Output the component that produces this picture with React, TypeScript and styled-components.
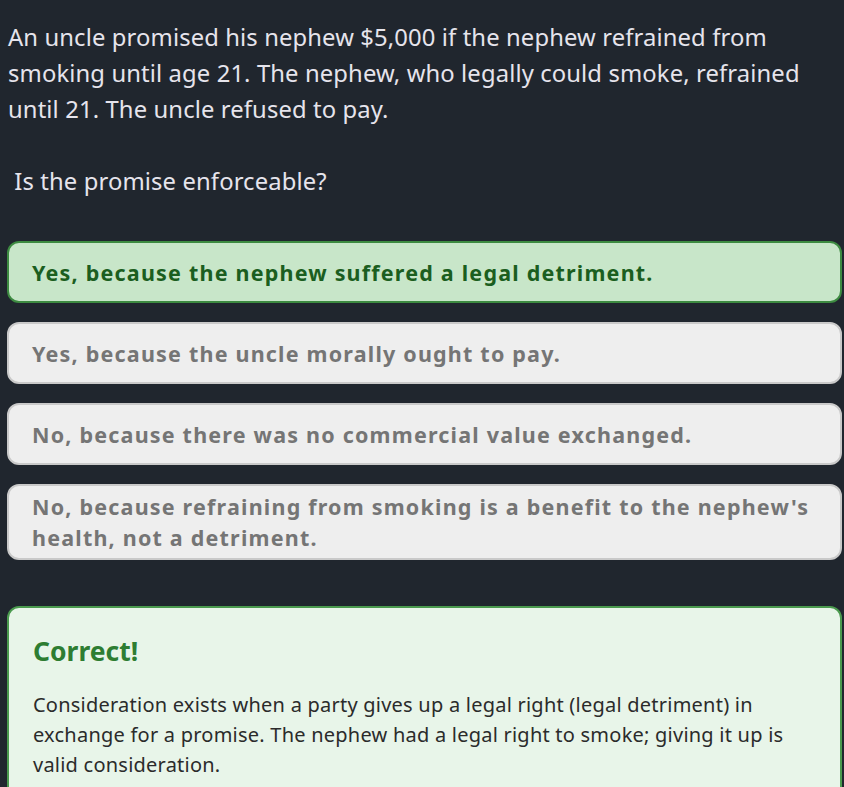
import React from "react";
import styled, { createGlobalStyle } from "styled-components";

const Global = createGlobalStyle`
  html, body {
    margin: 0;
    padding: 0;
    background: #20262e;
  }
  body {
    font-family: "Noto Sans", "Open Sans", sans-serif;
    overflow: hidden;
  }
`;

const Page = styled.main`
  width: 835px;
  padding: 19px 0 0 7px;
  display: flex;
  flex-direction: column;
`;

const Question = styled.p`
  margin: 0 0 42px 1px;
  font-size: 23.8px;
  line-height: 36px;
  letter-spacing: 0.12px;
  color: #e6e4ec;
  white-space: pre-wrap;
`;

const Options = styled.div`
  display: flex;
  flex-direction: column;
  gap: 19px;
`;

const Option = styled.button<{ $correct?: boolean }>`
  box-sizing: border-box;
  width: 100%;
  min-height: 62px;
  display: flex;
  align-items: center;
  text-align: left;
  padding: 5px 8px 5px 23px;
  border-radius: 12px;
  border: 2px solid ${(p) => (p.$correct ? "#3d8b41" : "#c9c9c9")};
  background: ${(p) => (p.$correct ? "#c8e6c9" : "#eeeeee")};
  color: ${(p) => (p.$correct ? "#1b5e20" : "#757575")};
  font-family: inherit;
  font-size: 21.5px;
  font-weight: 700;
  line-height: 31px;
  letter-spacing: 1.2px;
  cursor: pointer;
`;

const Explanation = styled.section`
  box-sizing: border-box;
  margin-top: 46px;
  padding: 26px 24px 40px;
  border: 2px solid #4a9a4e;
  border-radius: 12px;
  background: #e8f5e9;
`;

const ExplanationTitle = styled.h3`
  margin: 0 0 22px;
  font-size: 26.5px;
  line-height: 34px;
  font-weight: 700;
  color: #2e7d32;
`;

const ExplanationText = styled.p`
  margin: 0;
  font-size: 20px;
  line-height: 30px;
  letter-spacing: 0.23px;
  color: #2b2b2b;
`;

const options = [
  { text: "Yes, because the nephew suffered a legal detriment.", correct: true },
  { text: "Yes, because the uncle morally ought to pay.", correct: false },
  { text: "No, because there was no commercial value exchanged.", correct: false },
  {
    text: "No, because refraining from smoking is a benefit to the nephew's health, not a detriment.",
    correct: false,
  },
];

export default function App() {
  return (
    <>
      <Global />
      <Page>
        <Question>
          {
            "An uncle promised his nephew $5,000 if the nephew refrained from smoking until age 21. The nephew, who legally could smoke, refrained until 21. The uncle refused to pay.\n\n Is the promise enforceable?"
          }
        </Question>
        <Options>
          {options.map((o) => (
            <Option key={o.text} $correct={o.correct}>
              {o.text}
            </Option>
          ))}
        </Options>
        <Explanation>
          <ExplanationTitle>Correct!</ExplanationTitle>
          <ExplanationText>
            Consideration exists when a party gives up a legal right (legal detriment) in
            exchange for a promise. The nephew had a legal right to smoke; giving it up is
            valid consideration.
          </ExplanationText>
        </Explanation>
      </Page>
    </>
  );
}
